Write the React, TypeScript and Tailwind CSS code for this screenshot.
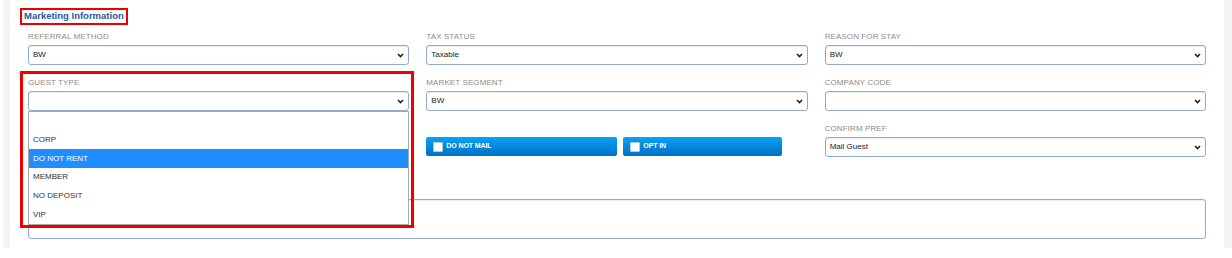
import { ReactNode } from "react"

// Marketing information panel with the guest type dropdown opened.

const font = { fontFamily: '"Liberation Sans", Arial, sans-serif' }

function Chevron() {
  return (
    <svg width="7" height="5" viewBox="0 0 7 5" className="shrink-0">
      <path d="M1 1 L3.5 3.6 L6 1" fill="none" stroke="#222" strokeWidth="1.6" />
    </svg>
  )
}

function Label({ children }: { children: ReactNode }) {
  return (
    <div className="h-[11px] text-[8px] leading-[11px] text-[#8c8c8c] uppercase tracking-[0.1px]">
      {children}
    </div>
  )
}

function SelectBox({ value }: { value?: string }) {
  return (
    <div className="h-[20px] rounded-[3px] border border-[#94abc8] bg-white shadow-[inset_0_1px_1px_rgba(0,0,0,0.08)] flex items-center justify-between pl-[4px] pr-[4px]">
      <span className="text-[8px] text-[#222]">{value}</span>
      <Chevron />
    </div>
  )
}

function Field({ label, value }: { label: string; value?: string }) {
  return (
    <div className="flex flex-col">
      <Label>{label}</Label>
      <div className="mt-[3px]">
        <SelectBox value={value} />
      </div>
    </div>
  )
}

const guestTypes = ["", "CORP", "DO NOT RENT", "MEMBER", "NO DEPOSIT", "VIP"]

function GuestTypeField() {
  return (
    <div className="relative flex flex-col">
      <Label>Guest Type</Label>
      <div className="relative mt-[3px]">
        <SelectBox />
        <div className="absolute left-0 right-0 top-full z-10 border border-[#a8a8a8] bg-white">
          {guestTypes.map((g, i) => (
            <div
              key={i}
              className={`h-[18.7px] flex items-center pl-[4px] text-[8px] ${
                g === "DO NOT RENT" ? "bg-[#1f8fff] text-white" : "text-[#333]"
              }`}
            >
              {g}
            </div>
          ))}
        </div>
      </div>
      <div className="pointer-events-none absolute -top-[6px] -left-[8px] -right-[5px] h-[157px] z-20 border-[3px] border-[#ee0000]" />
    </div>
  )
}

function CheckButton({ label, width }: { label: string; width: string }) {
  return (
    <div
      className={`${width} h-[19px] rounded-[2px] bg-gradient-to-b from-[#0aa2f6] to-[#0070c5] flex items-center pl-[7px] gap-[3px]`}
    >
      <span className="w-[10px] h-[10px] rounded-[1px] bg-white border border-[#b8c8d8]" />
      <span className="text-[7px] font-bold text-white tracking-[-0.1px]">{label}</span>
    </div>
  )
}

export default function App() {
  return (
    <div className="w-[1232px] h-[258px] bg-white pl-[3px]" style={font}>
      <div className="h-[248px] bg-[#f4f4f4] pl-[7px] pr-[8px]">
        <div className="h-full bg-white flex flex-col">
          <div className="ml-[10px] mt-[8px] self-start border-2 border-[#ee0000] px-[2px] h-[17px] flex items-center">
            <span className="text-[9.5px] font-bold text-[#2a5a9e]">Marketing Information</span>
          </div>
          <div className="px-[18px] mt-[6px] grid grid-cols-3 gap-x-[17px] gap-y-[12px]">
            <Field label="Referral Method" value="BW" />
            <Field label="Tax Status" value="Taxable" />
            <Field label="Reason For Stay" value="BW" />
            <GuestTypeField />
            <Field label="Market Segment" value="BW" />
            <Field label="Company Code" />
            <div />
            <div className="flex items-end gap-[6px] pb-[1px]">
              <CheckButton label="DO NOT MAIL" width="w-[191px]" />
              <CheckButton label="OPT IN" width="w-[159px]" />
            </div>
            <Field label="Confirm Pref" value="Mail Guest" />
          </div>
          <div className="px-[18px] mt-[42px]">
            <div className="h-[40px] rounded-[3px] border border-[#94abc8] bg-white shadow-[inset_0_1px_1px_rgba(0,0,0,0.08)]" />
          </div>
        </div>
      </div>
    </div>
  )
}
